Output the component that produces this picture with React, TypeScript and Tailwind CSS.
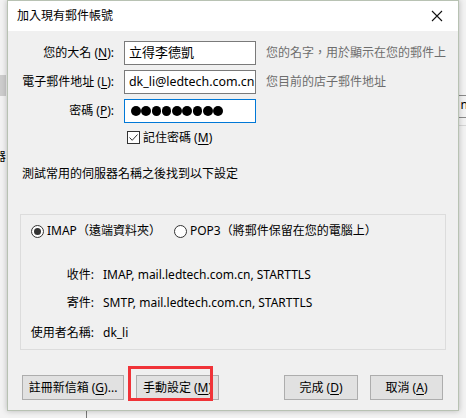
import React from "react";

const font = { fontFamily: '"Noto Sans", "Noto Sans CJK TC", sans-serif' };

function U({ children }: { children: React.ReactNode }) {
  return <span className="underline underline-offset-2">{children}</span>;
}

function Radio({ checked }: { checked?: boolean }) {
  return (
    <span className="w-[13px] h-[13px] rounded-full border border-[#333] bg-white flex items-center justify-center shrink-0">
      {checked && <span className="w-[7px] h-[7px] rounded-full bg-[#333]" />}
    </span>
  );
}

function Button({ children, w }: { children: React.ReactNode; w: string }) {
  return (
    <div className={`${w} h-[25px] bg-[#e1e1e1] border border-[#adadad] flex items-center justify-center text-[12px] text-black`}>
      {children}
    </div>
  );
}

export default function App() {
  return (
    <div className="relative w-[466px] h-[418px] bg-[#f3f3f3] overflow-hidden text-[12px] text-black" style={font}>
      {/* bits of the window behind */}
      <div className="absolute left-0 top-[75px] w-[6px] h-[21px] bg-[#cdcdcd]" />
      <div className="absolute left-[-6px] top-[148px] text-[12px]">器</div>
      <div className="absolute right-0 top-[95px] w-[8px] border-t border-[#8a8a8a]" />
      <div className="absolute right-0 top-[117px] w-[8px] border-t border-[#8a8a8a]" />
      <div className="absolute right-0 top-[125px] w-[8px] border-t border-[#d6d6d6]" />
      <div className="absolute right-[-2px] top-[99px] text-[12px] leading-none">n</div>
      <div className="absolute left-[86px] top-[410px] h-[8px] border-l border-[#777]" />

      {/* dialog */}
      <div className="absolute left-[7px] top-0 w-[452px] h-[411px] border border-[#b8c2b3] bg-[#f0f0f0] shadow-[0_0_6px_rgba(0,0,0,0.25)] flex flex-col">
        <div className="h-[30px] bg-white flex items-center justify-between pl-[9px] pr-[15px] shrink-0">
          <span className="text-[12px]">加入現有郵件帳號</span>
          <svg width="12" height="12" viewBox="0 0 12 12">
            <path d="M1 1 L11 11 M11 1 L1 11" stroke="#111" strokeWidth="1.1" />
          </svg>
        </div>

        <div className="flex flex-col pt-[10px]">
          <div className="grid grid-cols-[106px_132px_1fr] gap-x-[10px] gap-y-[5px] items-center">
            <span className="text-right">您的大名 (<U>N</U>):</span>
            <div className="h-[24px] bg-white border border-[#7a7a7a] flex items-center px-[4px] text-[13px]">立得李德凱</div>
            <span className="text-[#6d6d6d] whitespace-nowrap">您的名字，用於顯示在您的郵件上</span>

            <span className="text-right whitespace-nowrap">電子郵件地址 (<U>L</U>):</span>
            <div className="h-[24px] bg-white border border-[#7a7a7a] flex items-center pl-[4px] text-[12.4px] whitespace-nowrap overflow-hidden">dk_li@ledtech.com.cn</div>
            <span className="text-[#6d6d6d]">您目前的店子郵件地址</span>

            <span className="text-right">密碼 (<U>P</U>):</span>
            <div className="h-[24px] bg-white border border-[#0078d7] flex items-center gap-[0.8px] pl-[6px]">
              {Array.from({ length: 9 }).map((_, i) => (
                <span key={i} className="w-[9.5px] h-[9.5px] rounded-full bg-black" />
              ))}
            </div>
            <span />
          </div>

          <div className="flex items-center gap-[3px] ml-[119px] mt-[8px] h-[13px]">
            <span className="w-[13px] h-[13px] border border-[#333] bg-white flex items-center justify-center">
              <svg width="11" height="11" viewBox="0 0 11 11">
                <path d="M1.5 5.5 L4.2 8.3 L9.5 2.5" stroke="#333" strokeWidth="1" fill="none" />
              </svg>
            </span>
            <span>記住密碼 (<U>M</U>)</span>
          </div>

          <div className="ml-[14px] mt-[22px] leading-[16px]">測試常用的伺服器名稱之後找到以下設定</div>

          <div className="mx-[12px] mt-[32px] h-[136px] border border-[#dcdcdc] flex flex-col">
            <div className="flex items-center mt-[7px] ml-[10px]">
              <Radio checked />
              <span className="ml-[3px]">IMAP（遠端資料夾）</span>
              <span className="ml-[13px]"><Radio /></span>
              <span className="ml-[3px]">POP3（將郵件保留在您的電腦上）</span>
            </div>
            <div className="grid grid-cols-[76px_1fr] mt-[27px] leading-[16px]">
              <span className="text-right pr-[3px]">收件:</span>
              <span className="pl-[6px]">IMAP, mail.ledtech.com.cn, STARTTLS</span>
              <span className="text-right pr-[3px] mt-[12px]">寄件:</span>
              <span className="pl-[6px] mt-[12px]">SMTP, mail.ledtech.com.cn, STARTTLS</span>
              <span className="text-right pr-[3px] mt-[14px]">使用者名稱:</span>
              <span className="pl-[6px] mt-[14px]">dk_li</span>
            </div>
          </div>

          <div className="flex items-center mt-[25px] ml-[14px] mr-[15px]">
            <Button w="w-[102px]">註冊新信箱 (<U>G</U>)...</Button>
            <div className="relative ml-[12px]">
              <Button w="w-[83px]">手動設定 (<U>M</U>)</Button>
              <div className="absolute left-[-8px] top-[-9px] w-[85px] h-[35px] border-[3px] border-[#f03338]" />
            </div>
            <div className="flex-1" />
            <Button w="w-[74px]">完成 (<U>D</U>)</Button>
            <div className="w-[12px]" />
            <Button w="w-[73px]">取消 (<U>A</U>)</Button>
          </div>
        </div>
      </div>
    </div>
  );
}
